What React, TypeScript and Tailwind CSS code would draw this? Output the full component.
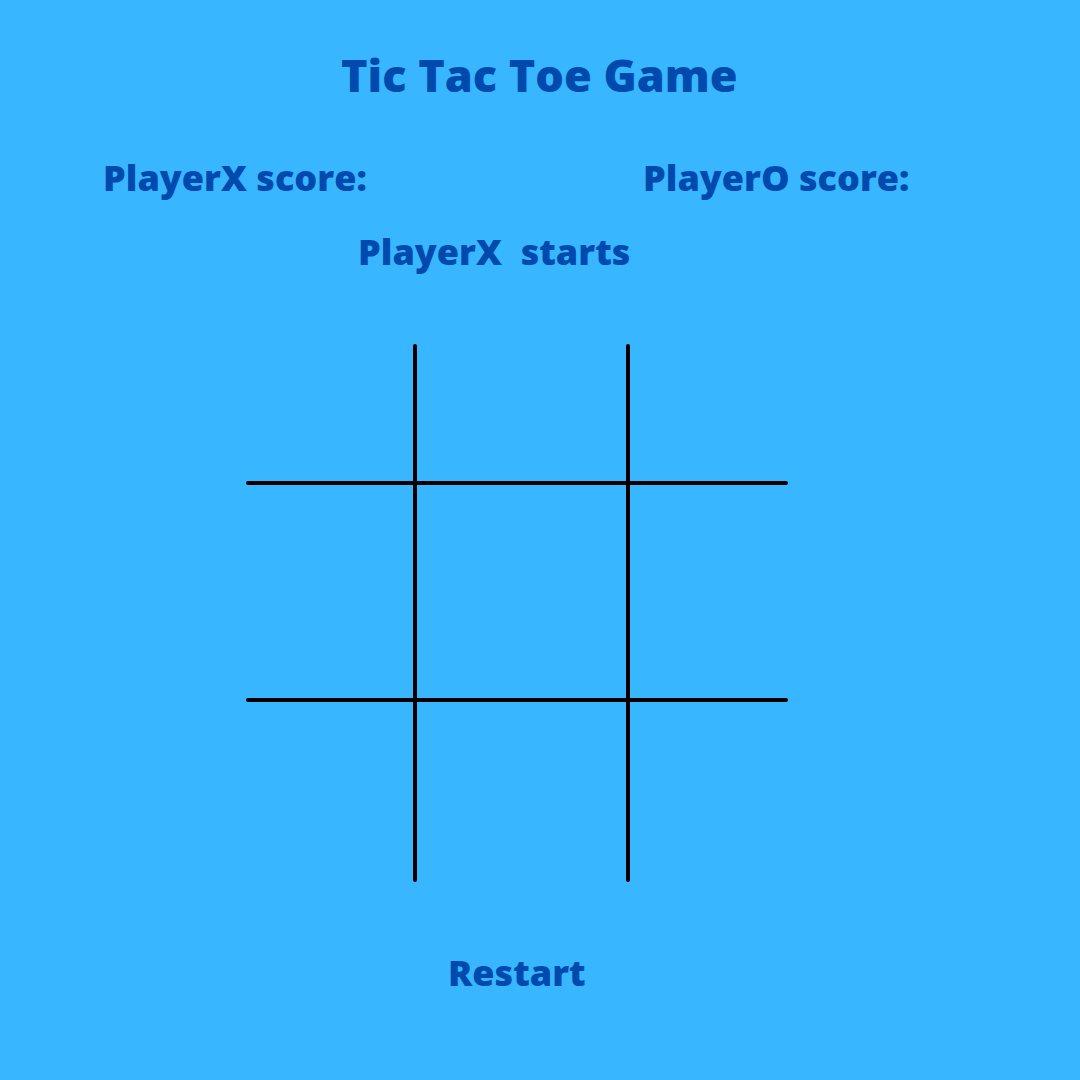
const font = { fontFamily: '"Open Sans", "Liberation Sans", sans-serif' }

const Board = () => (
  <svg width="546" height="542" viewBox="0 0 546 542" className="block ml-[244px] mt-[72px]">
    <g stroke="#000" strokeWidth="4" strokeLinecap="round" fill="none">
      <line x1="171" y1="4" x2="171" y2="538" />
      <line x1="384" y1="4" x2="384" y2="538" />
      <line x1="4" y1="141" x2="542" y2="141" />
      <line x1="4" y1="358" x2="542" y2="358" />
    </g>
  </svg>
)

export default function App() {
  return (
    <div
      className="w-[1080px] h-[1080px] bg-[#38b6ff] text-[#004aad] font-extrabold pt-[52px] overflow-hidden"
      style={font}
    >
      <h1 className="ml-[341px] text-[45px] leading-none whitespace-pre">Tic Tac Toe Game</h1>
      <div className="flex mt-[63px] text-[36px] leading-none">
        <p className="ml-[103px] w-[540px]">PlayerX score:</p>
        <p>PlayerO score:</p>
      </div>
      <p className="ml-[358px] mt-[38px] text-[36px] leading-none whitespace-pre">PlayerX  starts</p>
      <Board />
      <button className="block ml-[448px] mt-[71px] text-[36px] leading-none font-extrabold">Restart</button>
    </div>
  )
}
